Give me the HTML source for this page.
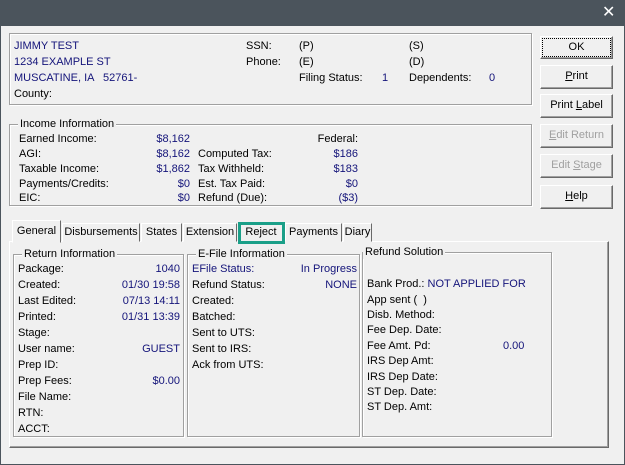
<!DOCTYPE html>
<html><head><meta charset="utf-8"><style>
*{margin:0;padding:0;box-sizing:border-box}
body{width:625px;height:465px;overflow:hidden;background:#4b545c;font-family:"Liberation Sans",Arial,sans-serif;font-size:11px;color:#000;position:relative}
#win{position:absolute;left:1px;top:26px;width:623px;height:438px;background:#f0f0f0}
.a{position:absolute;white-space:nowrap;line-height:14px;margin-top:1px}
.b{color:#14147a}
.r{text-align:right}
.box{position:absolute;border:1px solid #a0a0a0;box-shadow:1px 1px 0 #fff inset,1px 1px 0 #fff}
.grp{position:absolute;border:1px solid #a0a0a0;box-shadow:1px 1px 0 #fff inset,1px 1px 0 #fff}
.gt{position:absolute;top:-8px;left:8px;background:#f0f0f0;padding:0 2px;line-height:14px;white-space:nowrap}
.btn{position:absolute;left:540px;width:73px;background:#f0f0f0;border:1px solid;border-color:#fff #696969 #696969 #fff;box-shadow:inset -1px -1px 0 #a0a0a0;text-align:center;line-height:21px}
.dis{color:#a0a0a0}
.tab{position:absolute;top:223px;height:19px;border:1px solid;border-color:#fff #696969 transparent #fff;background:#f0f0f0;text-align:center;line-height:17px}
</style></head><body>
<div class="a" style="left:602px;top:4px;color:#fff;font-size:16px;line-height:16px">✕</div>
<div id="win"></div>

<div class="box" style="left:9px;top:33px;width:523px;height:72px"></div>
<div class="a b" style="left:14px;top:38px">JIMMY TEST</div>
<div class="a b" style="left:14px;top:54px">1234 EXAMPLE ST</div>
<div class="a b" style="left:14px;top:70px">MUSCATINE, IA &nbsp; 52761-</div>
<div class="a" style="left:14px;top:86px">County:</div>
<div class="a" style="left:246px;top:38px">SSN:</div>
<div class="a" style="left:246px;top:54px">Phone:</div>
<div class="a" style="left:299px;top:38px">(P)</div>
<div class="a" style="left:299px;top:54px">(E)</div>
<div class="a" style="left:299px;top:70px">Filing Status:</div>
<div class="a b" style="left:382px;top:70px">1</div>
<div class="a" style="left:409px;top:38px">(S)</div>
<div class="a" style="left:409px;top:54px">(D)</div>
<div class="a" style="left:409px;top:70px">Dependents:</div>
<div class="a b" style="left:489px;top:70px">0</div>

<div class="grp" style="left:9px;top:124px;width:523px;height:82px"><div class="gt">Income Information</div></div>
<div class="a" style="left:19px;top:131px">Earned Income:</div>
<div class="a" style="left:19px;top:146px">AGI:</div>
<div class="a" style="left:19px;top:161px">Taxable Income:</div>
<div class="a" style="left:19px;top:176px">Payments/Credits:</div>
<div class="a" style="left:19px;top:190px">EIC:</div>
<div class="a b r" style="left:120px;width:70px;top:131px">$8,162</div>
<div class="a b r" style="left:120px;width:70px;top:146px">$8,162</div>
<div class="a b r" style="left:120px;width:70px;top:161px">$1,862</div>
<div class="a b r" style="left:120px;width:70px;top:176px">$0</div>
<div class="a b r" style="left:120px;width:70px;top:190px">$0</div>
<div class="a" style="left:198px;top:146px">Computed Tax:</div>
<div class="a" style="left:198px;top:161px">Tax Withheld:</div>
<div class="a" style="left:198px;top:176px">Est. Tax Paid:</div>
<div class="a" style="left:198px;top:190px">Refund (Due):</div>
<div class="a r" style="left:290px;width:68px;top:131px">Federal:</div>
<div class="a b r" style="left:290px;width:68px;top:146px">$186</div>
<div class="a b r" style="left:290px;width:68px;top:161px">$183</div>
<div class="a b r" style="left:290px;width:68px;top:176px">$0</div>
<div class="a b r" style="left:290px;width:68px;top:190px">($3)</div>

<div class="btn" style="top:36px;height:23px"><span style="outline:1px dotted #000;outline-offset:0;padding:0 26px;line-height:17px;display:inline-block;margin-top:2px">OK</span></div>
<div class="btn" style="top:65px;height:24px"><u>P</u>rint</div>
<div class="btn" style="top:94px;height:24px">Print <u>L</u>abel</div>
<div class="btn dis" style="top:124px;height:24px"><u>E</u>dit Return</div>
<div class="btn dis" style="top:154px;height:24px">Edit <u>S</u>tage</div>
<div class="btn" style="top:185px;height:24px"><u>H</u>elp</div>

<div class="box" style="left:9px;top:241px;width:600px;height:207px;border-color:#fff #696969 #696969 #fff;box-shadow:inset -1px -1px 0 #a0a0a0"></div>
<div class="tab" style="left:62px;width:78px">Disbursements</div>
<div class="tab" style="left:141px;width:41px">States</div>
<div class="tab" style="left:183px;width:54px">Extension</div>
<div class="tab" style="left:238px;width:46px">Reject</div>
<div class="tab" style="left:285px;width:57px">Payments</div>
<div class="tab" style="left:343px;width:29px">Diary</div>
<div class="tab" style="left:12px;top:220px;height:23px;width:49px;line-height:20px;z-index:2">General</div>
<div style="position:absolute;left:238px;top:222px;width:47px;height:22px;border:3px solid #1a9f88;z-index:3"></div>

<div class="grp" style="left:13px;top:254px;width:171px;height:183px"><div class="gt">Return Information</div></div>
<div class="a" style="left:18px;top:261px">Package:</div>
<div class="a" style="left:18px;top:277px">Created:</div>
<div class="a" style="left:18px;top:293px">Last Edited:</div>
<div class="a" style="left:18px;top:309px">Printed:</div>
<div class="a" style="left:18px;top:325px">Stage:</div>
<div class="a" style="left:18px;top:341px">User name:</div>
<div class="a" style="left:18px;top:357px">Prep ID:</div>
<div class="a" style="left:18px;top:373px">Prep Fees:</div>
<div class="a" style="left:18px;top:389px">File Name:</div>
<div class="a" style="left:18px;top:405px">RTN:</div>
<div class="a" style="left:18px;top:421px">ACCT:</div>
<div class="a b r" style="left:90px;width:90px;top:261px">1040</div>
<div class="a b r" style="left:90px;width:90px;top:277px">01/30 19:58</div>
<div class="a b r" style="left:90px;width:90px;top:293px">07/13 14:11</div>
<div class="a b r" style="left:90px;width:90px;top:309px">01/31 13:39</div>
<div class="a b r" style="left:90px;width:90px;top:341px">GUEST</div>
<div class="a b r" style="left:90px;width:90px;top:373px">$0.00</div>

<div class="grp" style="left:187px;top:254px;width:173px;height:183px"><div class="gt">E-File Information</div></div>
<div class="a b" style="left:192px;top:261px">EFile Status:</div>
<div class="a" style="left:192px;top:277px">Refund Status:</div>
<div class="a" style="left:192px;top:293px">Created:</div>
<div class="a" style="left:192px;top:309px">Batched:</div>
<div class="a" style="left:192px;top:325px">Sent to UTS:</div>
<div class="a" style="left:192px;top:341px">Sent to IRS:</div>
<div class="a" style="left:192px;top:357px">Ack from UTS:</div>
<div class="a b r" style="left:260px;width:97px;top:261px">In Progress</div>
<div class="a b r" style="left:260px;width:97px;top:277px">NONE</div>

<div class="grp" style="left:362px;top:252px;width:190px;height:185px"><div class="gt" style="left:0">Refund Solution</div></div>
<div class="a" style="left:367px;top:276px">Bank Prod.: <span class="b">NOT APPLIED FOR</span></div>
<div class="a" style="left:367px;top:292px">App sent (&nbsp; )</div>
<div class="a" style="left:367px;top:307px">Disb. Method:</div>
<div class="a" style="left:367px;top:322px">Fee Dep. Date:</div>
<div class="a" style="left:367px;top:338px">Fee Amt. Pd:</div>
<div class="a b" style="left:503px;top:338px">0.00</div>
<div class="a" style="left:367px;top:353px">IRS Dep Amt:</div>
<div class="a" style="left:367px;top:369px">IRS Dep Date:</div>
<div class="a" style="left:367px;top:384px">ST Dep. Date:</div>
<div class="a" style="left:367px;top:399px">ST Dep. Amt:</div>
</body></html>
